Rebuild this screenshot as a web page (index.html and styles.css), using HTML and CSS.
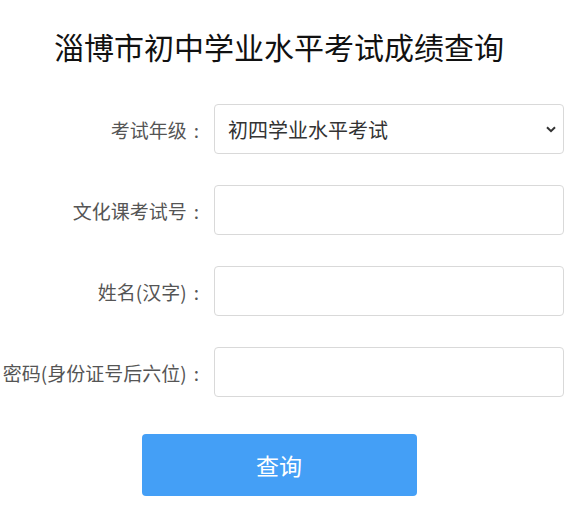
FILE: index.html
```html
<!DOCTYPE html>
<html lang="zh-CN">
<head>
<meta charset="utf-8">
<title>淄博市初中学业水平考试成绩查询</title>
<link rel="stylesheet" href="styles.css">
</head>
<body>
<div class="page">
  <h1 class="title">淄博市初中学业水平考试成绩查询</h1>
  <form class="form">
    <div class="row">
      <label class="label">考试年级<span class="colon">:</span></label>
      <div class="select-wrap">
        <select class="control select">
          <option>初四学业水平考试</option>
        </select>
        <svg class="chevron" width="10" height="7" viewBox="0 0 10 7"><path d="M1 1.2 L5 5.2 L9 1.2" fill="none" stroke="#333" stroke-width="2"/></svg>
      </div>
    </div>
    <div class="row">
      <label class="label">文化课考试号<span class="colon">:</span></label>
      <input class="control" type="text">
    </div>
    <div class="row">
      <label class="label">姓名(汉字)<span class="colon">:</span></label>
      <input class="control" type="text">
    </div>
    <div class="row">
      <label class="label">密码(身份证号后六位)<span class="colon">:</span></label>
      <input class="control" type="password">
    </div>
    <div class="actions">
      <button type="button" class="btn">查询</button>
    </div>
  </form>
</div>
</body>
</html>
```
FILE: styles.css
```css
html, body {
  margin: 0;
  padding: 0;
  background: #fff;
}
body {
  font-family: "Noto Sans CJK SC", "Noto Sans", sans-serif;
  overflow: hidden;
}
.page {
  width: 558px;
}
.title {
  margin: 26px 0 0;
  font-size: 30px;
  line-height: 40px;
  font-weight: normal;
  color: #111;
  text-align: center;
}
.form {
  margin-top: 38px;
  display: flex;
  flex-direction: column;
  gap: 31px;
}
.row {
  display: grid;
  grid-template-columns: 200px 350px;
  column-gap: 14px;
  align-items: center;
}
.label {
  display: flex;
  justify-content: flex-end;
  font-size: 19px;
  color: #555;
  white-space: nowrap;
}
.colon {
  margin-left: 7px;
  padding-right: 1px;
}
.control {
  box-sizing: border-box;
  width: 350px;
  height: 50px;
  border: 1px solid #d9d9d9;
  border-radius: 4px;
  background: #fff;
  font-family: inherit;
  font-size: 20px;
  color: #333;
  padding: 0 13px;
  margin: 0;
  outline: none;
}
.select-wrap {
  position: relative;
  width: 350px;
  height: 50px;
}
.select {
  appearance: none;
  -webkit-appearance: none;
}
.chevron {
  position: absolute;
  left: 332px;
  top: 22px;
  pointer-events: none;
}
.actions {
  margin-top: 6px;
  display: flex;
  justify-content: center;
}
.btn {
  width: 275px;
  height: 62px;
  border: none;
  border-radius: 4px;
  background: #449ff6;
  color: #fff;
  font-family: inherit;
  font-size: 23px;
  margin-left: 0;
}
```
